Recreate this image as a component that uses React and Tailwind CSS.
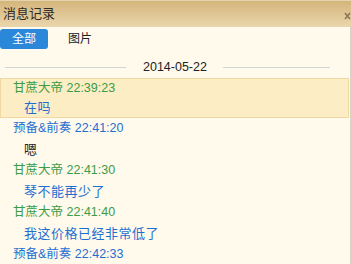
import React from "react";

const font = { fontFamily: '"Liberation Sans", "Noto Sans CJK SC", sans-serif' };

const rows = [
  { type: "name", who: "预备&前奏", time: "22:41:20", color: "text-[#1f6fd1]" },
  { type: "msg", text: "嗯", color: "text-[#222222]" },
  { type: "name", who: "甘蔗大帝", time: "22:41:30", color: "text-[#3a9c46]" },
  { type: "msg", text: "琴不能再少了", color: "text-[#1f6fd1]" },
  { type: "name", who: "甘蔗大帝", time: "22:41:40", color: "text-[#3a9c46]" },
  { type: "msg", text: "我这价格已经非常低了", color: "text-[#1f6fd1]" },
  { type: "name", who: "预备&前奏", time: "22:42:33", color: "text-[#1f6fd1]" },
];

function Row({ row }) {
  if (row.type === "name") {
    return (
      <div className={`h-[21px] flex items-center pl-[13px] text-[12.5px] ${row.color}`}>
        {row.who} {row.time}
      </div>
    );
  }
  return (
    <div className={`h-[21px] flex items-center pl-[24px] text-[13px] tracking-[0.5px] ${row.color}`}>
      {row.text}
    </div>
  );
}

export default function App() {
  return (
    <div className="w-[351px] h-[264px] overflow-hidden bg-[#fffaec] relative" style={font}>
      {/* title bar */}
      <div className="h-[27px] flex items-center justify-between border-t border-[#e6d4b0] bg-gradient-to-b from-[#d5b57b] to-[#ead6ad]">
        <span className="pl-[3px] text-[13px] text-[#2e2a22]">消息记录</span>
        <svg width="7" height="8" viewBox="0 0 7 8" className="mt-[3px]">
          <path d="M1 1 L6 7 M6 1 L1 7" stroke="#8a7758" strokeWidth="1.6" fill="none" />
        </svg>
      </div>

      {/* tabs */}
      <div className="flex items-center mt-[2px]">
        <div className="w-[48px] h-[20px] rounded-[3px] bg-[#2b87d9] text-white text-[12px] flex items-center justify-center">
          全部
        </div>
        <div className="ml-[20px] text-[12px] text-[#222222]">图片</div>
      </div>

      {/* date divider */}
      <div className="mt-[8px] h-[20px] flex items-center">
        <div className="ml-[5px] w-[121px] h-px bg-[#cfd6d6]"></div>
        <span className="ml-[17px] text-[12.5px] text-[#222222]">2014-05-22</span>
        <div className="ml-[16px] w-[107px] h-px bg-[#cfd6d6]"></div>
      </div>

      {/* highlighted message */}
      <div className="mt-[1px] mr-[2px] h-[40px] bg-[#fdedc5] border border-[#f0d8a3] flex flex-col">
        <div className="h-[19px] flex items-center pl-[12px] text-[12.5px] text-[#3a9c46]">
          甘蔗大帝 22:39:23
        </div>
        <div className="h-[20px] flex items-center pl-[23px] text-[13px] tracking-[0.5px] text-[#1f6fd1]">
          在吗
        </div>
      </div>

      {rows.map((r, i) => (
        <Row key={i} row={r} />
      ))}

      <div className="absolute right-0 top-[27px] bottom-0 w-px bg-[#d8d2c4]"></div>
    </div>
  );
}
